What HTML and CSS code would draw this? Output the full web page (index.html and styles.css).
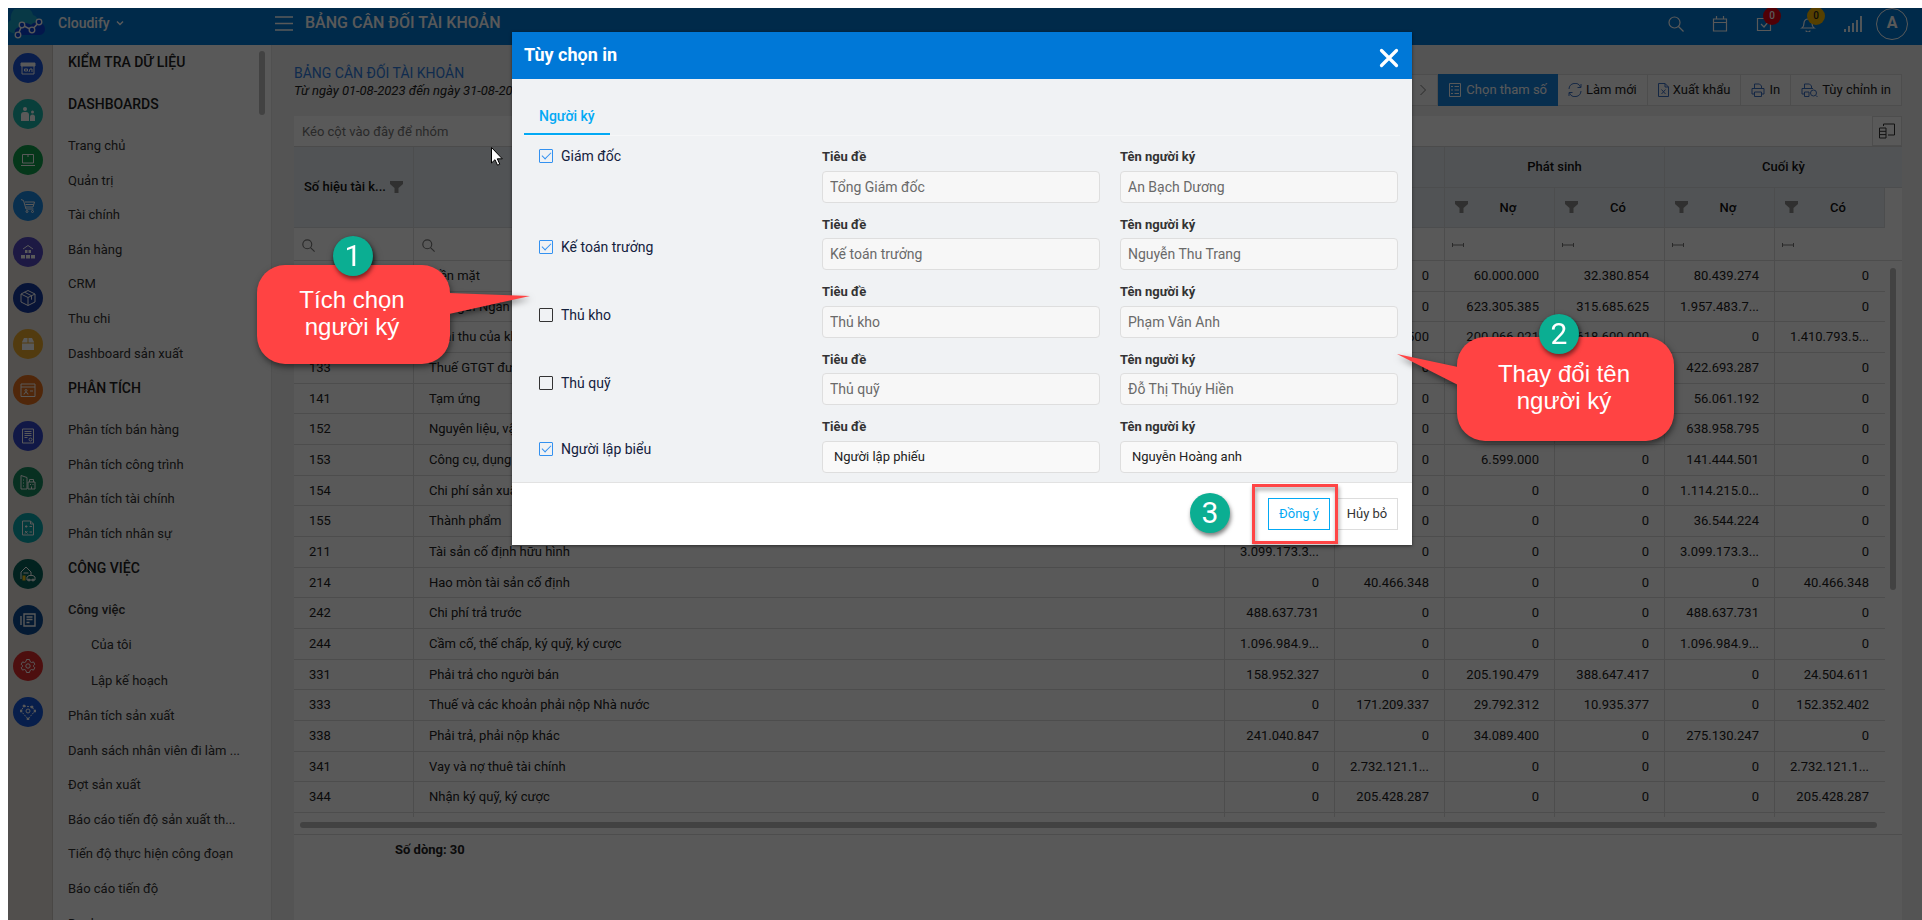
FILE: index.html
```html
<!DOCTYPE html>
<html lang="vi">
<head>
<meta charset="utf-8">
<title>Bảng cân đối tài khoản</title>
<link rel="stylesheet" href="styles.css">
</head>
<body>
<svg class="sprite" aria-hidden="true">
  <symbol id="funnel" viewBox="0 0 13 12"><path d="M0 0h13v3L8.500 7v5h-4V7L0 3z" fill="currentColor"/></symbol>
  <symbol id="lens" viewBox="0 0 16 16"><circle cx="6.500" cy="6.500" r="5.500"/><path d="M10.500 10.500L15.500 15.500"/></symbol>
  <symbol id="range" viewBox="0 0 12 6"><path d="M.5 1v4M11.500 1v4M.5 3h11"/></symbol>
</svg>
<div class="app">
  <header class="topbar">
    <svg class="logo" viewBox="0 0 38 30">
      <path d="M8 24a7 7 0 0 1-5-13A11 11 0 0 1 25 6a7 7 0 0 1 5 8l-2 10z" fill="#19a3c8"/>
      <path d="M10 26c-4 0-5-6 1-8 3-6 10-4 12-2 4-5 14-3 14 4 0 4-3 6-6 6z" fill="#0a44d8"/>
      <path d="M10 26L14 16L24 21L31 13" fill="none" stroke="#fff" stroke-width="1.500"/>
      <g fill="#0a44d8" stroke="#fff" stroke-width="1.300"><circle cx="10" cy="26" r="2.800"/><circle cx="14" cy="16" r="2.800"/><circle cx="24" cy="21" r="2.800"/><circle cx="31" cy="13" r="2.800"/></g>
    </svg>
    <button class="brand" type="button">Cloudify <svg class="caret" viewBox="0 0 8 6"><path d="M1 1.500l3 3 3-3"/></svg></button>
    <button class="burger" type="button" aria-label="Menu"><svg viewBox="0 0 18 15"><path d="M0 1h18M0 7.500h18M0 14h18"/></svg></button>
    <h1 class="page-title">BẢNG CÂN ĐỐI TÀI KHOẢN</h1>
    <nav class="tools">
      <button type="button" aria-label="Tìm kiếm"><svg viewBox="0 0 16 16"><use href="#lens"/></svg></button>
      <button type="button" aria-label="Lịch"><svg viewBox="0 0 16 16"><path d="M1.500 3h13v12h-13zM1.500 6.500h13M4.500 0v3M11.500 0v3"/></svg></button>
      <button type="button" aria-label="Công việc"><svg viewBox="0 0 16 16"><path d="M14.500 6v8.500h-13v-12h8M5 8l3 3 5-6"/></svg><span class="badge badge-red">0</span></button>
      <button type="button" aria-label="Thông báo"><svg viewBox="0 0 16 16"><path d="M2 12c1.500-1 2-2 2-5a4 4 0 0 1 8 0c0 3 .5 4 2 5zM6 14.500a2 1.500 0 0 0 4 0"/></svg><span class="badge badge-yellow">0</span></button>
      <button type="button" aria-label="Tín hiệu"><svg class="signal" viewBox="0 0 18 16"><path d="M1 13v3M5 10v6M9 7v9M13 4v12M17 0v16" stroke-width="1.800"/></svg></button>
      <button type="button" class="avatar">A</button>
    </nav>
  </header>
  <div class="workspace">
    <nav class="rail">
      <a href="#" class="c1"><svg viewBox="0 0 16 16"><path d="M1 3h14v3H1z" fill="#fff"/><path d="M2 6v8h12V6M4.500 11V9h3v2zM9 12l1-3h2v3"/></svg></a>
      <a href="#" class="c2"><svg viewBox="0 0 16 16"><g fill="#fff" stroke="none"><circle cx="5" cy="3" r="2"/><path d="M1 15V9a3 3 0 0 1 3-3h2a3 3 0 0 1 3 3v6z"/><circle cx="12.500" cy="6" r="1.500"/><path d="M10 15v-4a2 2 0 0 1 5 0v4z"/></g></svg></a>
      <a href="#" class="c3"><svg viewBox="0 0 16 16"><path d="M2.500 2.500h11v8.500h-11zM1 13.500h14M7 4h2"/></svg></a>
      <a href="#" class="c4"><svg viewBox="0 0 16 16"><path d="M1 1.500l2.500 1L6 11h7.500M5 4h9.500l-1.500 5H6M5.500 6.500h8"/><circle cx="7" cy="13.500" r="1"/><circle cx="12.500" cy="13.500" r="1"/></svg></a>
      <a href="#" class="c5"><svg viewBox="0 0 16 16"><path d="M3 5l5-3.500L13 5"/><path d="M5 6h2.500v3H5zM8.500 6H11v3H8.500zM1 11h4v3.500H1zM6 11h4v3.500H6zM11 11h4v3.500h-4z" fill="#fff" stroke="none"/></svg></a>
      <a href="#" class="c6"><svg viewBox="0 0 16 16"><path d="M8 0.500l7 3.500v8l-7 3.500-7-3.500V4zM1 4l7 3.500L15 4M8 7.500v8M4.500 2.200l7 3.500v4"/></svg></a>
      <a href="#" class="c7"><svg viewBox="0 0 16 16"><path d="M4 2h8l2 4v8H2V6z" fill="#fff" stroke="none"/><path d="M8 2v5M2 7h12" stroke="#eaa92c"/></svg></a>
      <a href="#" class="c8"><svg viewBox="0 0 16 16"><path d="M1 2h14v12.500H1zM1 5h14M10 9h3"/><circle cx="6" cy="8.500" r="1"/><path d="M4 12.500a2 2 0 0 1 4 0"/></svg></a>
      <a href="#" class="c9"><svg viewBox="0 0 16 16"><path d="M2.500 1h11v14h-11zM4.500 3.500h7M4.500 5.500h7M4.500 7.500h7M4.500 9.500h3"/><circle cx="10.500" cy="11.500" r="1.500"/></svg></a>
      <a href="#" class="c10"><svg viewBox="0 0 16 16"><path d="M1 15V1.500l6 2V15zM8 15V8h7v7zM9.500 8V5.500h4V8M3 6h1M3 9h1M3 12h1M10 10.500h1M12.500 10.500h1M11.500 15v-2.500"/></svg></a>
      <a href="#" class="c11"><svg viewBox="0 0 16 16"><path d="M2.500 1h8l3 3v11h-11zM10.500 1v3h3M5 6.500h2.500M9.500 6.500H12M5 11l2.500 2.500M7.500 11L5 13.500M9.500 12H12M6.200 5.200v2.500"/></svg></a>
      <a href="#" class="c12"><svg viewBox="0 0 16 16"><path d="M1 13V6l5-5 5 5v3M3.500 7h5M7 14h8v-3l-2-1.500H9L7 11z"/><path d="M2.500 9.500h3v5h-3z" fill="#f5c518" stroke="none"/><circle cx="9" cy="14" r="1"/><circle cx="13" cy="14" r="1"/></svg></a>
      <a href="#" class="c13"><svg viewBox="0 0 16 16"><path d="M4 2h11v12H4zM1 4v9M6.500 5h6M6.500 7.500h6M6.500 10.500h3" stroke-width="1.400"/></svg></a>
      <a href="#" class="c14"><svg viewBox="0 0 16 16"><path d="M6.500 1.500h3l.5 2 1.500 1 2-.6 1.300 2.400-1.300 1.200v1l1.300 1.200-1.300 2.400-2-.6-1.500 1-.5 2h-3l-.5-2-1.500-1-2 .6L1.200 9.700l1.300-1.200v-1L1.200 6.300l1.300-2.400 2 .6 1.500-1z"/><circle cx="8" cy="8" r="2.200"/></svg></a>
      <a href="#" class="c15"><svg viewBox="0 0 16 16"><path d="M4 2l8 1 3 4-7 8-7-8z" stroke-dasharray="2 1"/><circle cx="8" cy="7" r="2"/><g fill="#fff"><circle cx="4" cy="2" r="1"/><circle cx="12" cy="3" r="1"/><circle cx="15" cy="7" r="1"/><circle cx="8" cy="15" r="1"/><circle cx="1" cy="7" r="1"/></g></svg></a>
    </nav>
    <aside class="sidebar">
      <h2>KIỂM TRA DỮ LIỆU</h2>
      <h2>DASHBOARDS</h2>
      <a href="#">Trang chủ</a>
      <a href="#">Quản trị</a>
      <a href="#">Tài chính</a>
      <a href="#">Bán hàng</a>
      <a href="#">CRM</a>
      <a href="#">Thu chi</a>
      <a href="#">Dashboard sản xuất</a>
      <h2>PHÂN TÍCH</h2>
      <a href="#">Phân tích bán hàng</a>
      <a href="#">Phân tích công trình</a>
      <a href="#">Phân tích tài chính</a>
      <a href="#">Phân tích nhân sự</a>
      <h2>CÔNG VIỆC</h2>
      <a href="#" class="open">Công việc</a>
      <a href="#" class="sub">Của tôi</a>
      <a href="#" class="sub">Lập kế hoạch</a>
      <a href="#">Phân tích sản xuất</a>
      <a href="#">Danh sách nhân viên đi làm ...</a>
      <a href="#">Đợt sản xuất</a>
      <a href="#">Báo cáo tiến độ sản xuất th...</a>
      <a href="#">Tiến độ thực hiện công đoạn</a>
      <a href="#">Báo cáo tiến độ</a>
      <a href="#">Danh mục</a>
      <span class="side-thumb"></span>
    </aside>
    <main class="main">
      <div class="report-head">
        <div class="report-name">
          <a href="#" class="report-title">BẢNG CÂN ĐỐI TÀI KHOẢN</a>
          <p class="report-range">Từ ngày 01-08-2023 đến ngày 31-08-2023</p>
        </div>
        <div class="actions">
          <button type="button" class="step" aria-label="Tiếp"><svg viewBox="0 0 8 12"><path d="M1.500 1l5 5-5 5"/></svg></button>
          <button type="button" class="primary"><svg viewBox="0 0 14 14"><path d="M1.500 .5h11v13h-11zM3 3.500h2M6.500 3.500H11M3 7h2M6.500 7H11M3 10.500h2M6.500 10.500H11"/></svg>Chọn tham số</button>
          <button type="button"><svg viewBox="0 0 14 14"><path d="M1 6a6 6 0 0 1 11.500-2M13 1v3.500H9.500M13 8a6 6 0 0 1-11.500 2M1 13V9.500h3.500"/></svg>Làm mới</button>
          <button type="button"><svg class="narrow" viewBox="0 0 11 14"><path d="M.5 .5h6.500L10.500 4v9.500H.5zM7 .5V4h3.500M3.500 6.500l4 4.500M7.500 6.500L3.500 11"/></svg>Xuất khẩu</button>
          <button type="button"><svg viewBox="0 0 14 14"><path d="M3.500 5V1h5l2 2v2M3.500 11H1V5.500h12V11h-2.500M3.500 9h7v4.500h-7z"/></svg>In</button>
          <button type="button"><svg class="wide" viewBox="0 0 17 14"><path d="M3.500 5V1h5l2 2v2M3.500 11H1V5.500h11M3.500 9H8v4.500H3.500zM15 12.500l1.500 1.500"/><circle cx="12.500" cy="10" r="3"/></svg>Tùy chỉnh in</button>
        </div>
      </div>
      <section class="grid">
        <div class="group-bar"><span>Kéo cột vào đây để nhóm</span>
          <button type="button" aria-label="Chọn cột"><svg viewBox="0 0 16 16"><path d="M4.500 3V1h11v11H9M.5 5h6.500v10H.5zM.5 8.300H7M.5 11.600H7"/></svg></button>
        </div>
        <div class="table-area">
        <table>
          <colgroup><col class="w-code"><col><col class="w-num"><col class="w-num"><col class="w-num"><col class="w-num"><col class="w-num"><col class="w-num"><col class="w-end"></colgroup>
          <thead>
            <tr class="bands"><th rowspan="2"><div class="head">Số hiệu tài k... <svg><use href="#funnel"/></svg></div></th><th rowspan="2">Tên tài khoản</th><th colspan="2">Đầu kỳ</th><th colspan="2">Phát sinh</th><th colspan="3">Cuối kỳ</th></tr>
            <tr class="cols"><th><div class="head"><svg><use href="#funnel"/></svg><span>Nợ</span></div></th><th><div class="head"><svg><use href="#funnel"/></svg><span>Có</span></div></th><th><div class="head"><svg><use href="#funnel"/></svg><span>Nợ</span></div></th><th><div class="head"><svg><use href="#funnel"/></svg><span>Có</span></div></th><th><div class="head"><svg><use href="#funnel"/></svg><span>Nợ</span></div></th><th><div class="head"><svg><use href="#funnel"/></svg><span>Có</span></div></th><th class="spare"></th></tr>
            <tr class="filters"><td><svg class="mag"><use href="#lens"/></svg></td><td><svg class="mag"><use href="#lens"/></svg></td><td><svg class="rng"><use href="#range"/></svg></td><td><svg class="rng"><use href="#range"/></svg></td><td><svg class="rng"><use href="#range"/></svg></td><td><svg class="rng"><use href="#range"/></svg></td><td><svg class="rng"><use href="#range"/></svg></td><td><svg class="rng"><use href="#range"/></svg></td><td></td></tr>
          </thead>
          <tbody>
            <tr><td>111</td><td>Tiền mặt</td><td></td><td>0</td><td>60.000.000</td><td>32.380.854</td><td>80.439.274</td><td>0</td><td></td></tr>
            <tr><td>112</td><td>Tiền gửi Ngân hàng</td><td></td><td>0</td><td>623.305.385</td><td>315.685.625</td><td>1.957.483.7...</td><td>0</td><td></td></tr>
            <tr><td>131</td><td>Phải thu của khách hàng</td><td></td><td>500</td><td>200.066.021</td><td>618.600.000</td><td>0</td><td>1.410.793.5...</td><td></td></tr>
            <tr><td>133</td><td>Thuế GTGT được khấu trừ</td><td></td><td>0</td><td></td><td></td><td>422.693.287</td><td>0</td><td></td></tr>
            <tr><td>141</td><td>Tạm ứng</td><td></td><td>0</td><td></td><td></td><td>56.061.192</td><td>0</td><td></td></tr>
            <tr><td>152</td><td>Nguyên liệu, vật liệu</td><td></td><td>0</td><td></td><td></td><td>638.958.795</td><td>0</td><td></td></tr>
            <tr><td>153</td><td>Công cụ, dụng cụ</td><td></td><td>0</td><td>6.599.000</td><td>0</td><td>141.444.501</td><td>0</td><td></td></tr>
            <tr><td>154</td><td>Chi phí sản xuất</td><td></td><td>0</td><td>0</td><td>0</td><td>1.114.215.0...</td><td>0</td><td></td></tr>
            <tr><td>155</td><td>Thành phẩm</td><td></td><td>0</td><td>0</td><td>0</td><td>36.544.224</td><td>0</td><td></td></tr>
            <tr><td>211</td><td>Tài sản cố định hữu hình</td><td>3.099.173.3...</td><td>0</td><td>0</td><td>0</td><td>3.099.173.3...</td><td>0</td><td></td></tr>
            <tr><td>214</td><td>Hao mòn tài sản cố định</td><td>0</td><td>40.466.348</td><td>0</td><td>0</td><td>0</td><td>40.466.348</td><td></td></tr>
            <tr><td>242</td><td>Chi phí trả trước</td><td>488.637.731</td><td>0</td><td>0</td><td>0</td><td>488.637.731</td><td>0</td><td></td></tr>
            <tr><td>244</td><td>Cầm cố, thế chấp, ký quỹ, ký cược</td><td>1.096.984.9...</td><td>0</td><td>0</td><td>0</td><td>1.096.984.9...</td><td>0</td><td></td></tr>
            <tr><td>331</td><td>Phải trả cho người bán</td><td>158.952.327</td><td>0</td><td>205.190.479</td><td>388.647.417</td><td>0</td><td>24.504.611</td><td></td></tr>
            <tr><td>333</td><td>Thuế và các khoản phải nộp Nhà nước</td><td>0</td><td>171.209.337</td><td>29.792.312</td><td>10.935.377</td><td>0</td><td>152.352.402</td><td></td></tr>
            <tr><td>338</td><td>Phải trả, phải nộp khác</td><td>241.040.847</td><td>0</td><td>34.089.400</td><td>0</td><td>275.130.247</td><td>0</td><td></td></tr>
            <tr><td>341</td><td>Vay và nợ thuê tài chính</td><td>0</td><td>2.732.121.1...</td><td>0</td><td>0</td><td>0</td><td>2.732.121.1...</td><td></td></tr>
            <tr><td>344</td><td>Nhận ký quỹ, ký cược</td><td>0</td><td>205.428.287</td><td>0</td><td>0</td><td>0</td><td>205.428.287</td><td></td></tr>
            <tr class="peek"><td></td><td></td><td></td><td></td><td></td><td></td><td></td><td></td><td></td></tr>
          </tbody>
        </table>
        <span class="v-thumb"></span>
        </div>
        <div class="h-track"><span class="h-thumb"></span></div>
        <div class="summary">Số dòng: 30</div>
      </section>
    </main>
  </div>

  <div class="backdrop">
    <div class="dialog" role="dialog" aria-labelledby="dlg-title">
      <div class="dialog-head">
        <h2 id="dlg-title">Tùy chọn in</h2>
        <button type="button" aria-label="Đóng"><svg viewBox="0 0 16 16"><path d="M2 2l12 12M14 2L2 14"/></svg></button>
      </div>
      <div class="dialog-body">
        <div class="tabs"><button type="button" class="tab">Người ký</button></div>
        <div class="signers">
          <div class="signer first">
            <label class="check"><input type="checkbox" checked>Giám đốc</label>
            <label class="field">Tiêu đề<input type="text" value="Tổng Giám đốc" readonly></label>
            <label class="field">Tên người ký<input type="text" value="An Bạch Dương" readonly></label>
          </div>
          <div class="signer">
            <label class="check"><input type="checkbox" checked>Kế toán trưởng</label>
            <label class="field">Tiêu đề<input type="text" value="Kế toán trưởng" readonly></label>
            <label class="field">Tên người ký<input type="text" value="Nguyễn Thu Trang" readonly></label>
          </div>
          <div class="signer">
            <label class="check"><input type="checkbox">Thủ kho</label>
            <label class="field">Tiêu đề<input type="text" value="Thủ kho" readonly></label>
            <label class="field">Tên người ký<input type="text" value="Phạm Vân Anh" readonly></label>
          </div>
          <div class="signer">
            <label class="check"><input type="checkbox">Thủ quỹ</label>
            <label class="field">Tiêu đề<input type="text" value="Thủ quỹ" readonly></label>
            <label class="field">Tên người ký<input type="text" value="Đỗ Thị Thúy Hiền" readonly></label>
          </div>
          <div class="signer">
            <label class="check"><input type="checkbox" checked>Người lập biểu</label>
            <label class="field">Tiêu đề<input type="text" value="Người lập phiếu"></label>
            <label class="field">Tên người ký<input type="text" value="Nguyễn Hoàng anh"></label>
          </div>
        </div>
      </div>
      <div class="dialog-foot">
        <button type="button" class="ok">Đồng ý</button>
        <button type="button">Hủy bỏ</button>
        <span class="frame"></span>
        <span class="num num-3">3</span>
      </div>

      <svg class="cursor" viewBox="0 0 12 19"><path d="M.5 .5v15.500l3.500-3.300 2.500 5.500 2.300-1-2.500-5.400h5z" fill="#fff" stroke="#000"/></svg>
      <div class="callout callout-1">
        <svg class="tail" viewBox="0 0 81 21"><path d="M0 0L81 3L0 21z"/></svg>
        Tích chọn<br>người ký
        <span class="num">1</span>
      </div>
      <div class="callout callout-2">
        <svg class="tail" viewBox="0 0 61 31"><path d="M61 13L0 0L61 31z"/></svg>
        Thay đổi tên<br>người ký
        <span class="num">2</span>
      </div>
    </div>
  </div>
</div>
</body>
</html>
```

FILE: styles.css
```css
* { box-sizing: border-box; }
html, body { height: 100%; }
body {
  margin: 0;
  padding: 8px 0 0 8px;
  overflow: hidden;
  background: #fff;
  font: 13px/1.43 Roboto, "Liberation Sans", sans-serif;
  color: #222;
}
button { font: inherit; color: inherit; background: none; border: 0; padding: 0; }
a { color: inherit; text-decoration: none; }
h1, h2, p { margin: 0; }
svg { fill: none; stroke: currentColor; display: block; }
.sprite { position: absolute; width: 0; height: 0; }

.app { position: relative; height: 100%; display: flex; flex-direction: column; overflow: hidden; }

/* top bar */
.topbar {
  flex: none;
  height: 37px;
  padding: 0 14px 6px 0;
  display: flex;
  align-items: center;
  background: #0078d4;
  color: #fff;
}
.logo { width: 38px; height: 30px; stroke: none; }
.brand { display: flex; align-items: center; gap: 6px; margin-left: 12px; width: 217px; font-size: 14px; font-weight: 500; }
.caret { width: 8px; height: 6px; stroke-width: 1.5; }
.burger svg { width: 18px; height: 15px; stroke-width: 1.5; }
.page-title { margin-left: 12px; font-size: 16px; font-weight: 500; }
.tools { margin-left: auto; display: flex; align-items: center; gap: 28px; }
.tools button { position: relative; }
.tools svg { width: 16px; height: 16px; stroke-width: 1.2; }
.tools .signal { width: 18px; }
.tools .avatar { width: 32px; height: 32px; margin-left: -14px; border: 1px solid #fff; border-radius: 50%; font-size: 16px; font-weight: 700; }
.badge {
  position: absolute; left: 7px; top: -9px;
  width: 18px; height: 18px; border-radius: 50%;
  font-size: 10px; line-height: 18px; font-weight: 500; text-align: center;
}
.badge-red { background: #e60012; }
.badge-yellow { background: #f5b800; color: #222; }

.workspace { flex: 1; min-height: 0; display: flex; }

/* icon rail */
.rail {
  flex: none; width: 45px; padding: 8px 4px 0 5px;
  display: flex; flex-direction: column; gap: 16px;
  background: #e9e2dc; border-right: 1px solid #d0cbc6;
}
.rail a { flex: none; width: 30px; height: 30px; border-radius: 50%; display: grid; place-items: center; color: #fff; }
.rail svg { width: 16px; height: 16px; }
.c1 { background: #1b55d8; }
.c2 { background: #1cb5a8; }
.c3 { background: #0f9d4c; }
.c4 { background: #1a86e0; }
.c5 { background: #5348c0; }
.c6 { background: #163a9e; }
.c7 { background: #eaa92c; }
.c8 { background: #e5701d; }
.c9 { background: #3347c8; }
.c10 { background: #178a60; }
.c11 { background: #0ba5ac; }
.c12 { background: #07635a; }
.c13 { background: #0e4c92; }
.c14 { background: #dc2c2c; }
.c15 { background: #1556d6; }

/* sidebar menu */
.sidebar {
  position: relative; flex: none; width: 219px; padding: 0 30px 0 15px;
  background: #fff; overflow: hidden; white-space: nowrap; border-right: 1px solid #e4e4e4;
}
.sidebar h2 { margin-bottom: 6px; padding: 7px 0 9px; font-size: 14px; font-weight: 500; }
.sidebar a { display: block; padding: 8px 0; color: #333; }
.sidebar a.open { font-weight: 500; }
.sidebar a.sub { padding: 8px 0 9px 23px; }
.side-thumb { position: absolute; right: 6px; top: 6px; width: 6px; height: 64px; border-radius: 3px; background: #bdbdbd; }

/* report */
.main { flex: 1; min-width: 0; padding: 17px 20px 0 22px; background: #efefef; display: flex; flex-direction: column; }
.report-head { display: flex; justify-content: space-between; align-items: flex-start; height: 54px; }
.report-name { padding-top: 2px; }
.report-title { display: block; color: #2f7de0; font-size: 14px; line-height: 18px; }
.report-range { font-style: italic; line-height: 18px; }
.actions { display: flex; margin-top: 12px; }
.actions button {
  height: 32px; padding: 0 10px; display: flex; align-items: center; gap: 4px;
  background: #fafafa; border: 1px solid #dcdcdc; border-left-width: 0; white-space: nowrap; color: #222;
}
.actions svg { width: 14px; height: 14px; stroke: #3a6fc4; }
.actions svg.wide { width: 17px; }
.actions svg.narrow { width: 11px; }
.actions .step { padding: 0 10px; }
.actions .step svg { width: 8px; height: 12px; stroke: #777; }
.actions .primary { background: #1583e0; border-color: #1583e0; color: #fff; }
.actions .primary svg { stroke: #fff; }

.grid { flex: 1; min-height: 0; background: #fff; overflow: hidden; }
.group-bar { height: 31px; padding-left: 8px; display: flex; align-items: center; justify-content: space-between; color: #777; border-bottom: 1px solid #d8d8d8; }
.group-bar span { padding-top: 2px; }
.group-bar button { width: 30px; height: 30px; display: grid; place-items: center; border: 1px solid #ddd; color: #333; }
.group-bar svg { width: 16px; height: 16px; }
.table-area { position: relative; }
table { width: 100%; table-layout: fixed; border-collapse: separate; border-spacing: 0; line-height: 1.36; }
.w-code { width: 120px; }
.w-num { width: 110px; }
.w-end { width: 17px; }
th { padding: 0 10px; background: #e9eef2; font-weight: 500; border-right: 1px solid #d9dde0; border-bottom: 1px solid #d9dde0; color: #111; }
.bands th { height: 41px; }
.bands th:last-child { border-right: 0; }
.cols th { height: 40px; }
.cols .spare { background: #fff; border: 0; padding: 0; }
.head { display: flex; align-items: center; justify-content: space-between; gap: 4px; white-space: nowrap; }
.head span { flex: 1; text-align: center; }
.head svg { flex: none; width: 13px; height: 12px; color: #8a8a8a; stroke: none; }
td { padding: 6px 15px; border-right: 1px solid #ddd; border-bottom: 1px solid #ddd; white-space: nowrap; overflow: hidden; }
tbody td:nth-child(n+3) { text-align: right; }
td:nth-child(n+8) { border-right: 0; }
tbody td:nth-child(8) { padding-right: 16px; }
tbody td:last-child { border-bottom: 0; padding: 0; }
.filters td { height: 33px; padding: 2px 7px 0; }
.mag { width: 13px; height: 13px; margin-left: 1px; color: #777; stroke-width: 1.4; }
.rng { width: 12px; height: 6px; color: #777; }
.peek td { height: 4px; padding: 0; border-bottom: 0; }
.v-thumb { position: absolute; right: 6px; top: 121px; width: 6px; height: 322px; border-radius: 3px; background: #bdbdbd; }
.h-track { padding: 5px 25px 6px 6px; border-bottom: 1px solid #ddd; }
.h-thumb { display: block; height: 6px; border-radius: 3px; background: #bdbdbd; }
.summary { padding: 6px 101px; font-weight: 700; }

/* dialog */
.backdrop {
  position: absolute; inset: 0; padding: 24px 6px 0 0;
  display: flex; justify-content: center; align-items: flex-start;
  background: rgba(0, 0, 0, .65);
}
.dialog { position: relative; width: 900px; max-width: 100%; background: #f0f2f4; box-shadow: 0 1px 3px rgba(0, 0, 0, .5); }
.dialog-head { height: 47px; padding: 0 13px 0 12px; display: flex; align-items: center; justify-content: space-between; background: #0078d7; color: #fff; }
.dialog-head h2 { padding-bottom: 2px; font-size: 18px; font-weight: 700; line-height: 24px; }
.dialog-head button { padding-top: 4px; }
.dialog-head svg { width: 20px; height: 20px; stroke-width: 2.6; stroke-linecap: round; }
.dialog-body { padding: 18px 12px 0; }
.tabs { border-bottom: 1px solid #f6f7f8; }
.tab { height: 38px; padding: 2px 15px 0; font-size: 14px; font-weight: 500; color: #03a9f4; border-bottom: 2px solid #03a9f4; display: block; }
.signers { padding: 11px 2px 0 15px; }
.signer { display: grid; grid-template-columns: 263px 1fr 1fr; column-gap: 20px; align-items: center; }
.signer.first .check { align-self: start; }
.check { display: flex; align-items: center; gap: 8px; font-size: 14px; line-height: 18px; color: #14213d; }
.check input {
  appearance: none; width: 14px; height: 14px; margin: 0; border: 1px solid #333; border-radius: 1px;
  display: grid; place-items: center;
}
.check input:checked { border-color: #3391f0; }
.check input:checked::after { content: ""; width: 8px; height: 4px; margin-bottom: 3px; border: solid #3391f0; border-width: 0 0 1px 1px; rotate: -45deg; }
.field { padding: 1px 0 11px; font-weight: 700; color: #333; }
.signer:last-child .field { padding-bottom: 9px; }
.field input {
  display: block; width: 100%; height: 32px; margin-top: 4px; padding: 0 11px;
  border: 1px solid #dedede; border-radius: 4px; background: #f9f9f9; color: #222; font: 13px Roboto, sans-serif;
}
.field input:read-only { padding: 0 7px; background: #f7f7f7; color: #6a6a6a; font-size: 14px; }
.signer + .signer .field { padding-top: 2px; }
.dialog-foot { position: relative; padding: 15px 14px; display: flex; justify-content: flex-end; gap: 6px; background: #fff; border-top: 1px solid #e2e2e2; }
.dialog-foot button { height: 32px; width: 62px; border: 1px solid #ddd; background: #fff; color: #333; }
.dialog-foot .ok { border-color: #03a9f4; color: #03a9f4; }

/* guide annotations over the dialog */
.num {
  position: absolute; width: 40px; height: 40px; border-radius: 50%;
  background: #0bae92; color: #fff; box-shadow: 1px 3px 4px rgba(0, 0, 0, .5);
  font: 30px/40px Roboto, sans-serif; text-align: center;
}
.num-3 { right: 182px; top: 10px; }
.frame { position: absolute; right: 74px; top: 1px; width: 86px; height: 60px; border: 3px solid #ff4545; filter: drop-shadow(1px 3px 2px rgba(0, 0, 0, .4)); }
.callout {
  position: absolute; border-radius: 28px; background: #ff4343; color: #fff;
  font: 24px/27px "Liberation Sans", sans-serif; text-align: center;
  filter: drop-shadow(1px 3px 3px rgba(0, 0, 0, .5));
}
.callout-1 { left: -255px; top: 233px; width: 193px; height: 99px; padding: 21px 3px 0 0; }
.callout-2 { left: 945px; top: 305px; width: 217px; height: 104px; padding: 23px 3px 0 0; }
.tail { position: absolute; fill: #ff4343; stroke: none; }
.callout-1 .tail { left: 192px; top: 28px; width: 81px; height: 21px; }
.callout-2 .tail { left: -60px; top: 17px; width: 61px; height: 31px; }
.callout-1 .num { left: 76px; top: -29px; }
.callout-2 .num { left: 82px; top: -23px; }
.cursor { position: absolute; left: -21px; top: 115px; width: 12px; height: 19px; }
```
